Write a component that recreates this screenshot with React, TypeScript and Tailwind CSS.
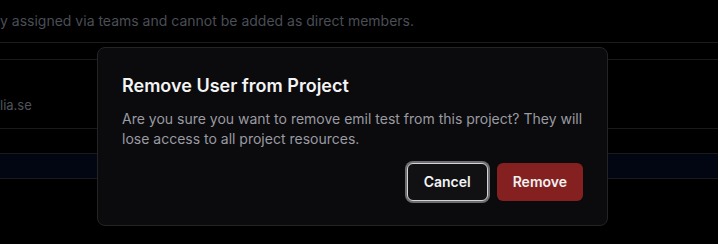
import React from 'react';

export default function App() {
  return (
    <div className="relative h-[244px] w-[718px] overflow-hidden bg-black font-['Inter',sans-serif]">
      {/* Page behind the dialog (dimmed) */}
      <div className="flex flex-col">
        <p className="h-[42px] whitespace-nowrap pt-[11px] text-sm leading-5 text-[#4a4e56]">
          y assigned via teams and cannot be added as direct members.
        </p>
        <div className="h-[17px] border-t border-[#1c1c1e]" />
        <div className="h-[69px] border-t border-[#1a1a1c] pt-[32px]">
          <span className="text-[13px] leading-5 text-[#4f535a]">lia.se</span>
        </div>
        <div className="h-[25px] border-t border-[#1a1a1c]" />
        <div className="h-[26px] border-y border-[#1a1a1c] bg-[#020612]" />
      </div>

      {/* Dialog */}
      <div className="absolute left-[97px] top-[47px] w-[511px] rounded-lg border border-[#242427] bg-[#0b0b0d] p-6">
        <h2 className="text-lg font-semibold leading-7 text-[#f4f4f5]">Remove User from Project</h2>
        <p className="mt-[9px] text-sm leading-5 text-[#9a9aa2]">
          Are you sure you want to remove emil test from this project? They will lose access to all project resources.
        </p>
        <div className="mt-[14px] flex justify-end gap-[9px]">
          <button className="rounded-md border border-[#d4d4d8] bg-[#111114] px-4 py-2 text-sm font-semibold leading-5 text-[#f4f4f5] ring-2 ring-[#6e6e72]">
            Cancel
          </button>
          <button className="rounded-md bg-[#842020] px-4 py-2 text-sm font-semibold leading-5 text-[#f1f1f1]">
            Remove
          </button>
        </div>
      </div>
    </div>
  );
}
